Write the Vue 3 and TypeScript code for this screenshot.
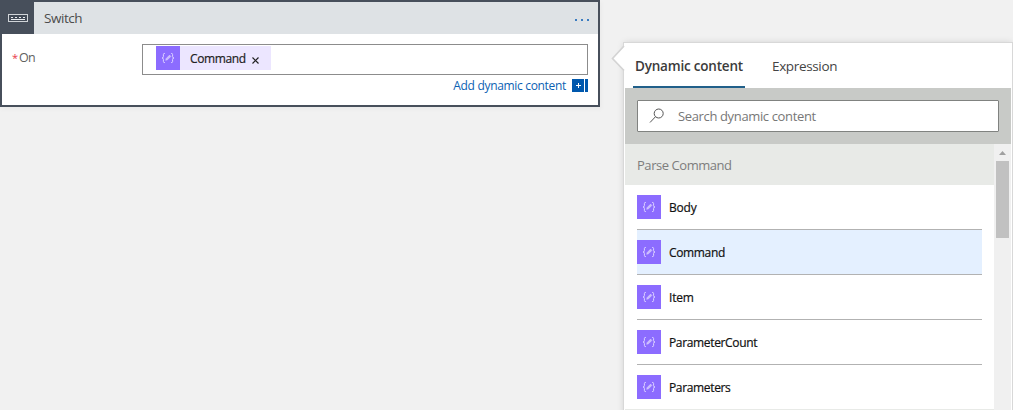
<script setup lang="ts">
interface Output {
  name: string
  spacing: string
}

const outputs: Output[] = [
  { name: 'Body', spacing: 'short' },
  { name: 'Command', spacing: 'regular' },
  { name: 'Item', spacing: 'short' },
  { name: 'ParameterCount', spacing: 'regular' },
  { name: 'Parameters', spacing: 'regular' },
]
const selected = 'Command'
</script>

<template>
  <main class="designer">
    <section class="card">
      <header class="card-head">
        <div class="card-icon">
          <svg width="20" height="8" viewBox="0 0 20 8">
            <rect x="0.5" y="0.5" width="19" height="7" fill="#424a56" stroke="#d0d4d8" />
            <path d="M3 5.5H17" stroke="#e8ebee" />
            <path d="M3 3.5h2M7 3.5h2M11 3.5h2M15 3.5h2" stroke="#e8ebee" />
          </svg>
        </div>
        <div class="card-title">Switch</div>
        <div class="dots"><i></i><i></i><i></i></div>
      </header>
      <div class="card-body">
        <label class="label"><span class="star">*</span><span class="label-text">On</span></label>
        <div class="field">
          <div class="input">
            <div class="token">
              <span class="glyph">
                <svg width="24" height="24" viewBox="0 0 24 24">
                  <path d="M9 7.5H8.2Q7.4 7.5 7.4 8.5V10.6Q7.4 12 6 12Q7.4 12 7.4 13.4V15.5Q7.4 16.5 8.2 16.5H9M15 7.5h.8Q16.6 7.5 16.6 8.5v2.1Q16.6 12 18 12Q16.6 12 16.6 13.4v2.1Q16.6 16.5 15.8 16.5H15" />
                  <path d="M9.7 14.3l.5-1.8 3.4-3.4 1.3 1.3-3.4 3.4z" class="pencil" />
                </svg>
              </span>
              <span class="token-name">Command</span>
              <svg class="close" width="7" height="7" viewBox="0 0 7 7"><path d="M.5.5l6 6M6.5.5l-6 6" stroke="#222" stroke-width="1.2" /></svg>
            </div>
          </div>
          <div class="add">
            <span>Add dynamic content</span>
            <svg width="16" height="13" viewBox="0 0 16 13">
              <path d="M0 0h12v13H0zM13 0h3v13h-3z" fill="#0058ad" />
              <path d="M4 6.500h5M6.500 4v5" stroke="#fff" />
            </svg>
          </div>
        </div>
      </div>
    </section>

    <aside class="panel">
      <svg class="beak" width="14" height="30" viewBox="0 0 14 30">
        <path d="M14 2.5L2 15.5L14 28z" fill="#fff" />
        <path d="M13 3L1.5 15.5L13 27.5" fill="none" stroke="#d4d4d4" stroke-width="1.7" />
      </svg>
      <nav class="tabs">
        <div class="tab active">Dynamic content</div>
        <div class="tab">Expression</div>
      </nav>
      <div class="search">
        <div class="search-box">
          <svg width="16" height="16" viewBox="0 0 16 16" fill="none" stroke="#555">
            <circle cx="9.7" cy="5.5" r="4.5" />
            <path d="M6.5 8.7L1 14.5" />
          </svg>
          <span>Search dynamic content</span>
        </div>
      </div>
      <div class="results">
        <div class="list">
          <div class="group">Parse Command</div>
          <div v-for="o in outputs" :key="o.name" class="row" :class="{ selected: o.name === selected }">
            <span class="glyph">
              <svg width="24" height="24" viewBox="0 0 24 24">
                <path d="M9 7.5H8.2Q7.4 7.5 7.4 8.5V10.6Q7.4 12 6 12Q7.4 12 7.4 13.4V15.5Q7.4 16.5 8.2 16.5H9M15 7.5h.8Q16.6 7.5 16.6 8.5v2.1Q16.6 12 18 12Q16.6 12 16.6 13.4v2.1Q16.6 16.5 15.8 16.5H15" />
                <path d="M9.7 14.3l.5-1.8 3.4-3.4 1.3 1.3-3.4 3.4z" class="pencil" />
              </svg>
            </span>
            <span class="row-name" :class="o.spacing">{{ o.name }}</span>
          </div>
          <div class="next-group"></div>
        </div>
        <div class="scrollbar">
          <svg width="17" height="17" viewBox="0 0 17 17"><path d="M5 11L8.5 7L12 11z" fill="#a0a0a0" /></svg>
          <div class="thumb"></div>
        </div>
      </div>
    </aside>
  </main>
</template>

<style>
body {
  background: #f1f1f1;
  overflow: hidden;
}
</style>

<style scoped>
.designer,
.designer * {
  box-sizing: border-box;
}
.designer {
  display: flex;
  align-items: flex-start;
  gap: 24px;
  width: 1013px;
  height: 410px;
  overflow: hidden;
  background: #f1f1f1;
  font-family: "Open Sans", "Noto Sans", sans-serif;
  white-space: nowrap;
}
.card {
  width: 600px;
  height: 107px;
  flex: none;
  border: 2px solid #474f5b;
  background: #fff;
  box-shadow: 1px 2px 5px rgba(0, 0, 0, 0.04);
}
.card-head {
  display: flex;
  align-items: center;
  height: 32px;
  background: #dee2e5;
}
.card-icon {
  display: flex;
  align-items: center;
  width: 32px;
  height: 32px;
  padding-left: 6px;
  background: #474f5b;
}
.card-title {
  flex: 1;
  padding-left: 10px;
  font-size: 13.5px;
  letter-spacing: -0.45px;
  line-height: 33px;
  color: #4c4c4c;
}
.dots {
  display: flex;
  gap: 4px;
  padding: 3px 9px 0 0;
}
.dots i {
  width: 2px;
  height: 2px;
  background: #3b7cc0;
}
.card-body {
  display: flex;
  padding: 10px 10px 0;
}
.label {
  display: flex;
  width: 130px;
  font-size: 12.5px;
  line-height: 28px;
  color: #606060;
}
.label-text {
  letter-spacing: -0.6px;
}
.star {
  width: 7px;
  font-size: 11px;
  color: #e8394a;
}
.input {
  width: 446px;
  height: 31px;
  padding: 1px 13px;
  border: 1px solid #8c8c8c;
}
.token {
  display: flex;
  align-items: center;
  width: 115px;
  height: 24px;
  background: #ece6ff;
}
.glyph {
  width: 24px;
  height: 24px;
  flex: none;
  background: #8c6cff;
}
.glyph svg {
  display: block;
  fill: none;
  stroke: #ddd3ff;
  stroke-width: 1;
}
.glyph .pencil {
  fill: #cbbcff;
  stroke-width: 0.5;
}
.token-name {
  flex: none;
  width: 62px;
  padding: 1px 0 0 10px;
  font-size: 12px;
  letter-spacing: -0.38px;
  color: #222;
}
.close {
  flex: none;
  margin: 5px 0 0 10px;
}
.add {
  display: flex;
  align-items: center;
  justify-content: flex-end;
  gap: 6px;
  height: 21px;
  font-size: 12px;
  letter-spacing: -0.32px;
  color: #0b5fb3;
}
.panel {
  position: relative;
  width: 388px;
  height: 380px;
  flex: none;
  margin-top: 43px;
  padding: 0 1px;
  background: #fff;
  box-shadow: 0 0 0 1px #d8d8d8, 0 0 7px rgba(0, 0, 0, 0.15);
}
.beak {
  position: absolute;
  left: -13px;
  top: 0;
}
.tabs {
  display: flex;
  gap: 25px;
  height: 45px;
  padding-left: 8px;
  font-size: 13.5px;
}
.tab {
  height: 45px;
  padding-left: 2px;
  line-height: 47px;
  letter-spacing: -0.35px;
  color: #444;
}
.tab.active {
  width: 112px;
  border-bottom: 2px solid #21608a;
  font-weight: 600;
  letter-spacing: -0.2px;
  color: #3b3b3b;
}
.search {
  height: 56px;
  padding: 12px;
  background: #c8cac7;
}
.search-box {
  display: flex;
  align-items: center;
  gap: 13px;
  height: 32px;
  padding-left: 11px;
  border: 1px solid #808280;
  border-radius: 1px;
  background: #fff;
  font-size: 13px;
  letter-spacing: -0.36px;
  color: #777;
}
.results {
  display: flex;
}
.list {
  width: 369px;
}
.group {
  height: 41px;
  padding-left: 12px;
  background: #e8eae7;
  font-size: 13px;
  letter-spacing: -0.45px;
  line-height: 43px;
  color: #7d7d7d;
}
.row {
  display: flex;
  align-items: center;
  gap: 8px;
  width: 345px;
  height: 45px;
  margin-left: 12px;
  border-bottom: 1px solid #b2b2b2;
  font-size: 12px;
  color: #111;
}
.row:nth-last-child(2) {
  height: 44px;
  border-bottom: 0;
}
.row.selected {
  background: #e4f0ff;
}
.row-name {
  padding-top: 1px;
}
.row-name,
.token-name {
  -webkit-text-stroke: 0.2px currentColor;
}
.regular {
  letter-spacing: -0.35px;
}
.short {
  letter-spacing: -0.2px;
}
.next-group {
  height: 20px;
  background: #e8eae7;
}
.scrollbar {
  width: 17px;
  height: 300px;
  background: #f0f0f0;
}
.scrollbar svg {
  display: block;
}
.thumb {
  width: 13px;
  height: 77px;
  margin-left: 2px;
  background: #c1c1c1;
}
</style>
